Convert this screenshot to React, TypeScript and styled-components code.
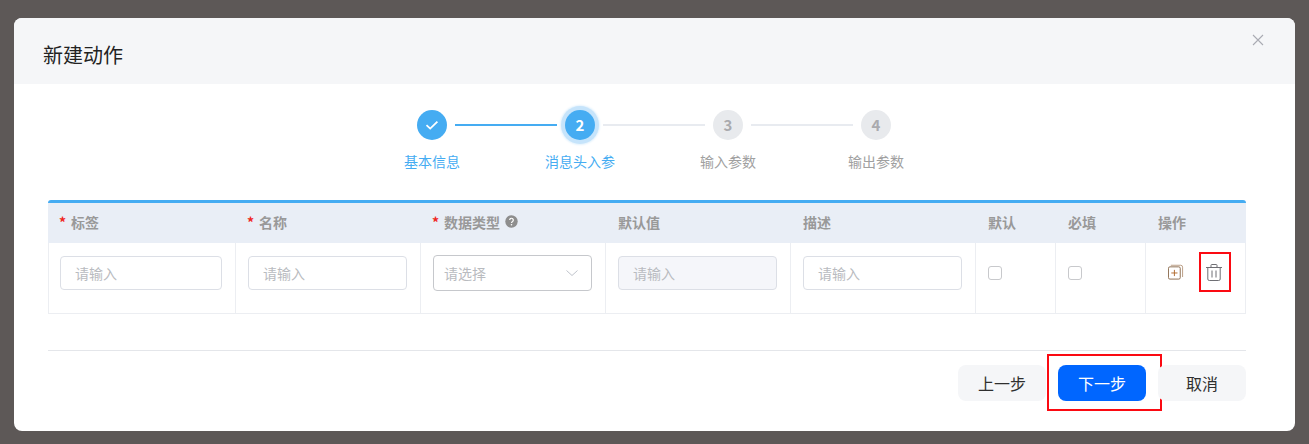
import React from "react";
import styled, { createGlobalStyle } from "styled-components";

const Global = createGlobalStyle`
  html, body { margin: 0; padding: 0; background: #5d5857; }
  body { font-family: "Noto Sans CJK SC", "Noto Sans", sans-serif; }
  * { box-sizing: border-box; }
`;
const Page = styled.div`
  width: 1309px; height: 444px; padding: 18px 14px 13px; overflow: hidden; background: #5d5857;
`;
const Dialog = styled.div`
  width: 1281px; height: 413px; background: #fff; border-radius: 8px; overflow: hidden; display: flex; flex-direction: column;
`;
const Header = styled.div`
  height: 66px; background: #f5f6f8; padding: 0 29px; display: flex; align-items: center; justify-content: space-between;
`;
const Title = styled.div`
  font-size: 20px; line-height: 28px; color: #222; padding-top: 8px;
`;
const CloseButton = styled.div`
  width: 14px; height: 14px; margin: -22px 1px 0 0; display: flex; color: #a9abb3;
`;
const Steps = styled.div`
  display: flex; padding: 26px 0 0 344px; height: 116px;
`;
const Step = styled.div`
  width: 148px; display: flex; flex-direction: column; align-items: center; position: relative;
`;
const Circle = styled.div<{ $state: "done" | "active" | "todo" }>`
  width: 30px; height: 30px; border-radius: 50%; display: flex; align-items: center; justify-content: center;
  font-size: 15px; font-weight: 700; line-height: 30px;
  background: ${(p) => (p.$state === "todo" ? "#e8eaed" : "#45acf2")};
  color: ${(p) => (p.$state === "todo" ? "#aaaaae" : "#fff")};
  box-shadow: ${(p) => (p.$state === "active" ? "0 0 0 4px #c6e4fb, 0 0 2px 5px #e3f2fd" : "none")};
`;
const StepLabel = styled.div<{ $on: boolean }>`
  margin-top: 11px; font-size: 14px; line-height: 20px; white-space: nowrap; color: ${(p) => (p.$on ? "#45acf2" : "#a0a0a0")};
`;
const Connector = styled.div<{ $on: boolean }>`
  position: absolute; left: 97px; top: 14px; width: 102px; height: 2px; background: ${(p) => (p.$on ? "#45acf2" : "#e8ebf0")};
`;
const Table = styled.div`
  margin: 0 49px 0 34px; width: 1198px; border-top: 3px solid #45acf2; border-radius: 3px 3px 0 0;
`;
const COLS = "187px 185px 185px 185px 185px 80px 90px 99px";
const HeadRow = styled.div`
  display: grid; grid-template-columns: ${COLS}; height: 40px; background: #e9eef6; padding: 0 1px;
`;
const HeadCell = styled.div<{ $first?: boolean }>`
  padding: 0 0 3px ${(p) => (p.$first ? 11 : 12)}px; font-size: 14px; font-weight: 700; color: #999; display: flex; align-items: center; gap: 3px;
`;
const Star = styled.span`
  color: #f0261e; margin: 0 2px 0 -1px;
`;
const Row = styled.div`
  display: grid; grid-template-columns: ${COLS}; height: 71px; border: 1px solid #eceef2; border-top: none;
`;
const Cell = styled.div<{ $last?: boolean; $first?: boolean }>`
  padding: 13px 13px 0 ${(p) => (p.$first ? 11 : 12)}px; border-right: ${(p) => (p.$last ? "none" : "1px solid #eceef2")};
`;
const Field = styled.div<{ $disabled?: boolean; $select?: boolean }>`
  height: ${(p) => (p.$select ? 36 : 34)}px; margin-top: ${(p) => (p.$select ? -1 : 0)}px;
  border: 1px solid ${(p) => (p.$select ? "#c6c8cc" : "#dcdfe6")}; border-radius: 4px;
  background: ${(p) => (p.$disabled ? "#f5f6fa" : "#fff")};
  padding: 0 15px 0 ${(p) => (p.$select ? 10 : 14)}px; display: flex; align-items: center; justify-content: space-between;
  font-size: 14px; color: #b9bbc0;
`;
const Check = styled.div`
  width: 14px; height: 14px; margin-top: 10px; border: 1px solid #c8c9cc; border-radius: 3px; background: #fff;
`;
const Ops = styled.div`
  display: flex; align-items: flex-start; padding: 8px 0 0 10px; position: relative; gap: 22px;
`;
const IconWrap = styled.div`
  position: relative; width: 16px; height: 17px; display: flex;
`;
const RedBox = styled.div<{ $w: number; $h: number; $l: number; $t: number }>`
  position: absolute; left: ${(p) => p.$l}px; top: ${(p) => p.$t}px; width: ${(p) => p.$w}px; height: ${(p) => p.$h}px;
  border: 2px solid #fb0a12; pointer-events: none;
`;
const Footer = styled.div`
  margin: 36px 49px 0 34px; border-top: 1px solid #e4e6ea; padding-top: 14px; display: flex; justify-content: flex-end; gap: 12px;
`;
const Btn = styled.div<{ $primary?: boolean }>`
  position: relative; width: 88px; height: 36px; border-radius: 8px; display: flex; align-items: center; justify-content: center;
  font-size: 16px; background: ${(p) => (p.$primary ? "#0066ff" : "#f5f6f8")}; color: ${(p) => (p.$primary ? "#fff" : "#2f2f2f")};
`;

const steps = [
  { l: "基本信息", s: "done" as const, n: "" },
  { l: "消息头入参", s: "active" as const, n: "2" },
  { l: "输入参数", s: "todo" as const, n: "3" },
  { l: "输出参数", s: "todo" as const, n: "4" },
];
const heads: { t: string; req?: boolean; help?: boolean }[] = [
  { t: "标签", req: true }, { t: "名称", req: true }, { t: "数据类型", req: true, help: true },
  { t: "默认值" }, { t: "描述" }, { t: "默认" }, { t: "必填" }, { t: "操作" },
];

export default function App() {
  return (
    <Page>
      <Global />
      <Dialog>
        <Header>
          <Title>新建动作</Title>
          <CloseButton>
            <svg width="14" height="14" viewBox="0 0 14 14" fill="none" stroke="currentColor" strokeWidth="1.1">
              <path d="M2 2l10 10M12 2L2 12" />
            </svg>
          </CloseButton>
        </Header>
        <Steps>
          {steps.map((s, i) => (
            <Step key={s.l}>
              <Circle $state={s.s}>
                {s.s === "done" ? (
                  <svg width="14" height="14" viewBox="0 0 14 14" fill="none" stroke="#fff" strokeWidth="1.8">
                    <path d="M1.5 7.2l3.7 3.4 7.2-7" />
                  </svg>
                ) : s.n}
              </Circle>
              <StepLabel $on={s.s !== "todo"}>{s.l}</StepLabel>
              {i < 3 && <Connector $on={i === 0} />}
            </Step>
          ))}
        </Steps>
        <Table>
          <HeadRow>
            {heads.map((h, i) => (
              <HeadCell key={h.t} $first={i === 0}>
                {h.req && <Star>*</Star>}
                {h.t}
                {h.help && (
                  <svg width="13" height="13" viewBox="0 0 13 13" style={{ marginLeft: 2, marginTop: -1 }}>
                    <circle cx="6.5" cy="6.5" r="6.2" fill="#8e8e8e" />
                    <path d="M4.7 5.1a1.8 1.8 0 1 1 2.9 1.4c-.7.5-1.1.8-1.1 1.5" fill="none" stroke="#fff" strokeWidth="1.2" />
                    <circle cx="6.5" cy="9.8" r=".8" fill="#fff" />
                  </svg>
                )}
              </HeadCell>
            ))}
          </HeadRow>
          <Row>
            <Cell $first><Field>请输入</Field></Cell>
            <Cell><Field>请输入</Field></Cell>
            <Cell>
              <Field $select>
                请选择
                <svg width="12" height="12" viewBox="0 0 12 12" fill="none" stroke="#c0c4cc" strokeWidth="1" style={{ marginRight: -2 }}>
                  <path d="M.5 3.5L6 8.5l5.5-5" />
                </svg>
              </Field>
            </Cell>
            <Cell><Field $disabled>请输入</Field></Cell>
            <Cell><Field>请输入</Field></Cell>
            <Cell><Check /></Cell>
            <Cell><Check /></Cell>
            <Cell $last>
              <Ops>
                <IconWrap>
                  <svg width="17" height="17" viewBox="0 0 17 17" fill="none" stroke="#7d7770" strokeWidth="1">
                    <rect x="0.5" y="2.5" width="12.5" height="13" rx="1.5" stroke="#8a6a4c" />
                    <path d="M3 .8h10.5a2 2 0 0 1 2 2v10.5" stroke="#b89a80" />
                    <path d="M6.8 5.7v6.6M3.5 9h6.6" stroke="#b0672a" />
                  </svg>
                </IconWrap>
                <IconWrap>
                  <svg width="16" height="17" viewBox="0 0 16 17" fill="none" stroke="#6f6f74" strokeWidth="1">
                    <path d="M0 3.5h16M5 3.5V1.2a.7.7 0 0 1 .7-.7h4.6a.7.7 0 0 1 .7.7v2.3" />
                    <path d="M1.8 3.5v11.5a1.5 1.5 0 0 0 1.5 1.5h9.4a1.5 1.5 0 0 0 1.5-1.5V3.5" />
                    <path d="M6 6.5v7M10 6.5v7" />
                  </svg>
                  <RedBox $l={-7} $t={-12} $w={32} $h={40} />
                </IconWrap>
              </Ops>
            </Cell>
          </Row>
        </Table>
        <Footer>
          <Btn>上一步</Btn>
          <Btn $primary>
            下一步
            <RedBox $l={-11} $t={-11} $w={115} $h={57} />
          </Btn>
          <Btn>取消</Btn>
        </Footer>
      </Dialog>
    </Page>
  );
}
